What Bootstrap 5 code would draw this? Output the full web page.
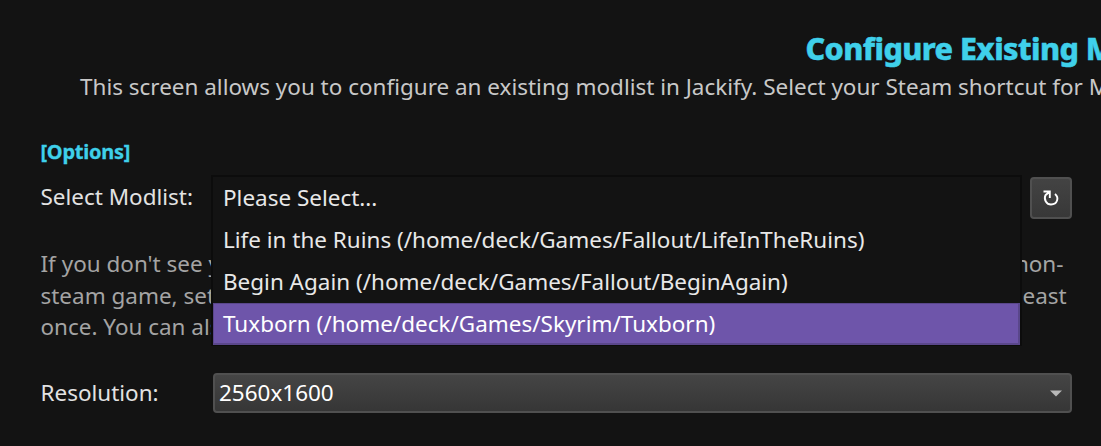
<!DOCTYPE html>
<html lang="en">
<head>
<meta charset="utf-8">
<title>Jackify</title>
<link href="https://cdn.jsdelivr.net/npm/bootstrap@5.3.0/dist/css/bootstrap.min.css" rel="stylesheet">
<style>
body{background:#131313;color:#e2e2e2;font-family:"Noto Sans",sans-serif;font-size:22.47px;line-height:32px;width:1101px;height:446px}
.screen{padding:30px 29.500px 0 40.5px}
.title{font-size:30.500px;line-height:36px;font-weight:800;letter-spacing:-.55px;-webkit-text-stroke:.5px #3fd0ea;color:#3fd0ea;margin-left:765px}
.intro{color:#c8c8c8;margin:5px 0 0 39.500px}
.options{font-size:20px;line-height:28px;font-weight:700;letter-spacing:-.25px;-webkit-text-stroke:.3px #3fd0ea;color:#3fd0ea;margin-top:35px}
.field{display:grid;grid-template-columns:172.500px 1fr;align-items:center}
.picker{height:42px;margin-top:11px}
.picker label{position:relative;top:-1px}
.reload{width:42px;height:42px;padding:0;border:2px solid #505050;border-radius:4px;background:linear-gradient(#434343,#383838)}
.options-menu{left:170.500px;top:-2px;width:811px;border:2px solid #0c0c0c;border-bottom-width:1px;background:#131313;z-index:2}
.options-menu li{height:42px;line-height:42px;padding-left:10px;color:#e8e8e8}
.options-menu li.chosen{background:#6e55aa;color:#fff;box-shadow:inset 0 0 0 1px #5a478b,inset -1px -1px 0 1px #5a478b}
.hint{margin-top:29px;color:#a4a4a4;line-height:31.500px}
.hint .tail{width:49px}
.hint .start{width:172px}
.resolution{height:41px;margin-top:30px}
.combo{height:40px;border:2px solid #505050;border-radius:4px;background:linear-gradient(#454545,#363636);color:#fff;padding:0 8px 0 4px;line-height:36px}
</style>
<script src="https://cdn.jsdelivr.net/npm/bootstrap@5.3.0/dist/js/bootstrap.bundle.min.js"></script>
</head>
<body class="overflow-hidden">
<main class="screen">
<h1 class="title mb-0 text-nowrap">Configure Existing Modlist</h1>
<p class="intro mb-0 text-nowrap">This screen allows you to configure an existing modlist in Jackify. Select your Steam shortcut for Modlist</p>
<h2 class="options mb-0">[Options]</h2>
<div class="field picker position-relative">
<label>Select Modlist:</label>
<button class="btn reload d-flex align-items-center justify-content-center ms-auto" aria-label="Refresh">
<svg width="20" height="20" viewBox="0 0 20 20" fill="none" stroke="#fff" stroke-width="1.900"><path d="M2.500 3.500H8.800V10M8.800 3.500 4.500 7.200C2.500 11.500 5.500 16.500 10 16.500c6.500 0 8.300-7 4-10.500"/></svg>
</button>
<ul class="options-menu position-absolute list-unstyled mb-0">
<li>Please Select...</li>
<li>Life in the Ruins (/home/deck/Games/Fallout/LifeInTheRuins)</li>
<li>Begin Again (/home/deck/Games/Fallout/BeginAgain)</li>
<li class="chosen">Tuxborn (/home/deck/Games/Skyrim/Tuxborn)</li>
</ul>
</div>
<div class="hint text-nowrap">
<div class="d-flex justify-content-between"><span class="start overflow-hidden">If you don't see y</span><span class="tail d-flex justify-content-end pe-2">non-</span></div>
<div class="d-flex justify-content-between"><span class="start overflow-hidden">steam game, set</span><span class="tail">east</span></div>
<div><span>once. You can als</span></div>
</div>
<div class="field resolution">
<label>Resolution:</label>
<div class="combo d-flex justify-content-between align-items-center"><span>2560x1600</span><svg width="12" height="7" viewBox="0 0 12 7"><path d="M0 .5h12L6 6.500z" fill="#b8b8b8"/></svg></div>
</div>
</main>
</body>
</html>
